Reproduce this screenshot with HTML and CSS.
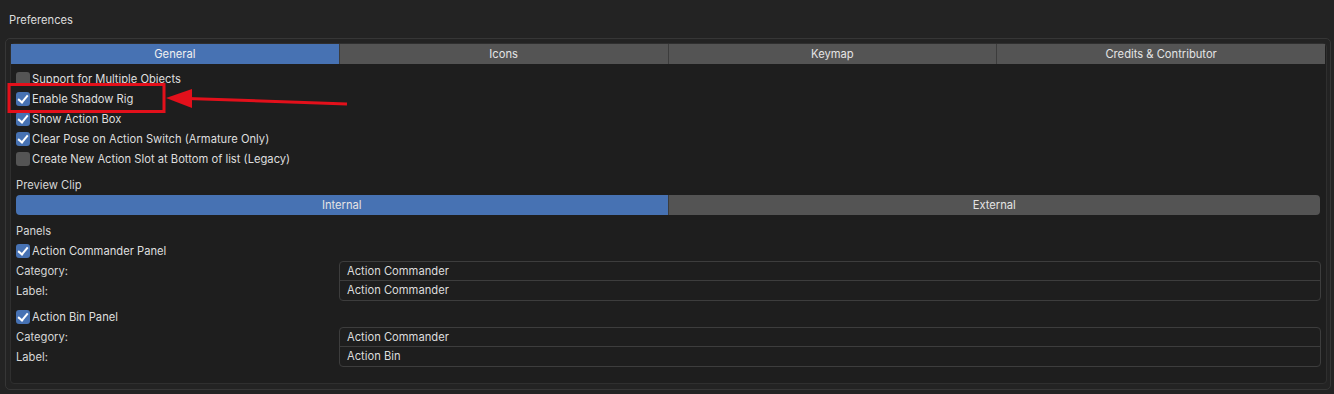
FILE: index.html
```html
<!doctype html>
<html lang="en">
<head>
	<meta charset="UTF-8">
	<title>Preferences</title>
	<link rel="stylesheet" href="styles.css">
</head>
<body>
	<div class="title">Preferences</div>
	<div class="frame">
		<div class="inner">
			<div class="tabs">
				<div class="tab on">General</div>
				<div class="tab">Icons</div>
				<div class="tab">Keymap</div>
				<div class="tab">Credits &amp; Contributor</div>
			</div>
			<div class="content">
				<div class="checks">
					<div class="row"><span class="box"></span>Support for Multiple Objects</div>
					<div class="row"><span class="box on"></span>Enable Shadow Rig</div>
					<div class="row"><span class="box on"></span>Show Action Box</div>
					<div class="row"><span class="box on"></span>Clear Pose on Action Switch (Armature Only)</div>
					<div class="row"><span class="box"></span>Create New Action Slot at Bottom of list (Legacy)</div>
				</div>

				<div class="label head">Preview Clip</div>
				<div class="enum">
					<div class="opt on">Internal</div>
					<div class="opt">External</div>
				</div>

				<div class="label head2">Panels</div>
				<div class="row"><span class="box on"></span>Action Commander Panel</div>
				<div class="props">
					<div class="names">
						<div class="label">Category:</div>
						<div class="label">Label:</div>
					</div>
					<div class="fields">
						<div class="field">Action Commander</div>
						<div class="field">Action Commander</div>
					</div>
				</div>

				<div class="row gap"><span class="box on"></span>Action Bin Panel</div>
				<div class="props">
					<div class="names">
						<div class="label">Category:</div>
						<div class="label">Label:</div>
					</div>
					<div class="fields">
						<div class="field">Action Commander</div>
						<div class="field">Action Bin</div>
					</div>
				</div>
			</div>
		</div>
	</div>

	<!-- red annotation drawn over the screenshot -->
	<svg class="mark" width="1334" height="394" viewBox="0 0 1334 394">
		<rect x="9" y="84.5" width="155" height="27" fill="none" stroke="#e3101b" stroke-width="3"/>
		<line x1="188" y1="98.5" x2="347" y2="104" stroke="#e3101b" stroke-width="3"/>
		<polygon points="166,98 192,89 192,108" fill="#e3101b"/>
	</svg>
</body>
</html>
```

FILE: styles.css
```css
*{
	margin:0;
	padding:0;
	box-sizing:border-box;
}
body{
	width:1334px;
	height:394px;
	background:#232323;
	color:#dcdcdc;
	font-family:Inter, "Liberation Sans", sans-serif;
	font-size:11.2px;
	overflow:hidden;
}
.title{
	height:38px;
	padding:13px 0 0 9px;
	line-height:14px;
}
.frame{
	margin:0 3px 0 5px;
	height:352px;
	border:1px solid #363636;
	border-radius:5px;
	padding:4px 3px 5px 4px;
}
.inner{
	height:100%;
	background:#1e1e1e;
	border:1px solid #2f2f2f;
	border-radius:4px;
}
.tabs{
	display:flex;
	height:20px;
	margin-right:1px;
}
.tab{
	flex:1;
	background:#545454;
	border-left:1px solid #3c3c3c;
	text-align:center;
	line-height:20px;
	color:#e4e4e4;
}
.tab:first-child{
	border-left:none;
}
.tab.on{
	background:#4772b3;
	color:#f0f0f0;
}
.content{
	padding:5px 5px 0 5px;
}
.row{
	display:flex;
	align-items:center;
	height:20px;
	color:#dedede;
}
.row.gap{
	margin-top:6px;
}
.box{
	width:14px;
	height:14px;
	margin-right:2px;
	border-radius:3px;
	background:#545454;
	position:relative;
}
.box.on{
	background:#4772b3;
}
.box.on:after{
	content:"";
	position:absolute;
	left:4px;
	top:1px;
	width:4px;
	height:8px;
	border:solid #fff;
	border-width:0 2px 2px 0;
	transform:rotate(40deg);
}
.label{
	height:20px;
	line-height:20px;
	color:#d6d6d6;
}
.label.head{
	margin-top:6px;
}
.label.head2{
	margin-top:6px;
}
.enum{
	display:flex;
	height:20px;
	margin-right:1px;
	border-radius:4px;
	overflow:hidden;
}
.opt{
	flex:1;
	background:#545454;
	text-align:center;
	line-height:20px;
	color:#e4e4e4;
}
.opt.on{
	background:#4772b3;
	border-right:1px solid #3c3c3c;
}
.props{
	display:flex;
}
.names{
	width:323px;
}
.fields{
	flex:1;
	border:1px solid #3d3d3d;
	border-radius:4px;
	height:40px;
}
.field{
	height:19px;
	line-height:19px;
	padding-left:7px;
	color:#dcdcdc;
}
.field:first-child{
	border-bottom:1px solid #3d3d3d;
}
.mark{
	position:absolute;
	left:0;
	top:0;
}
```
